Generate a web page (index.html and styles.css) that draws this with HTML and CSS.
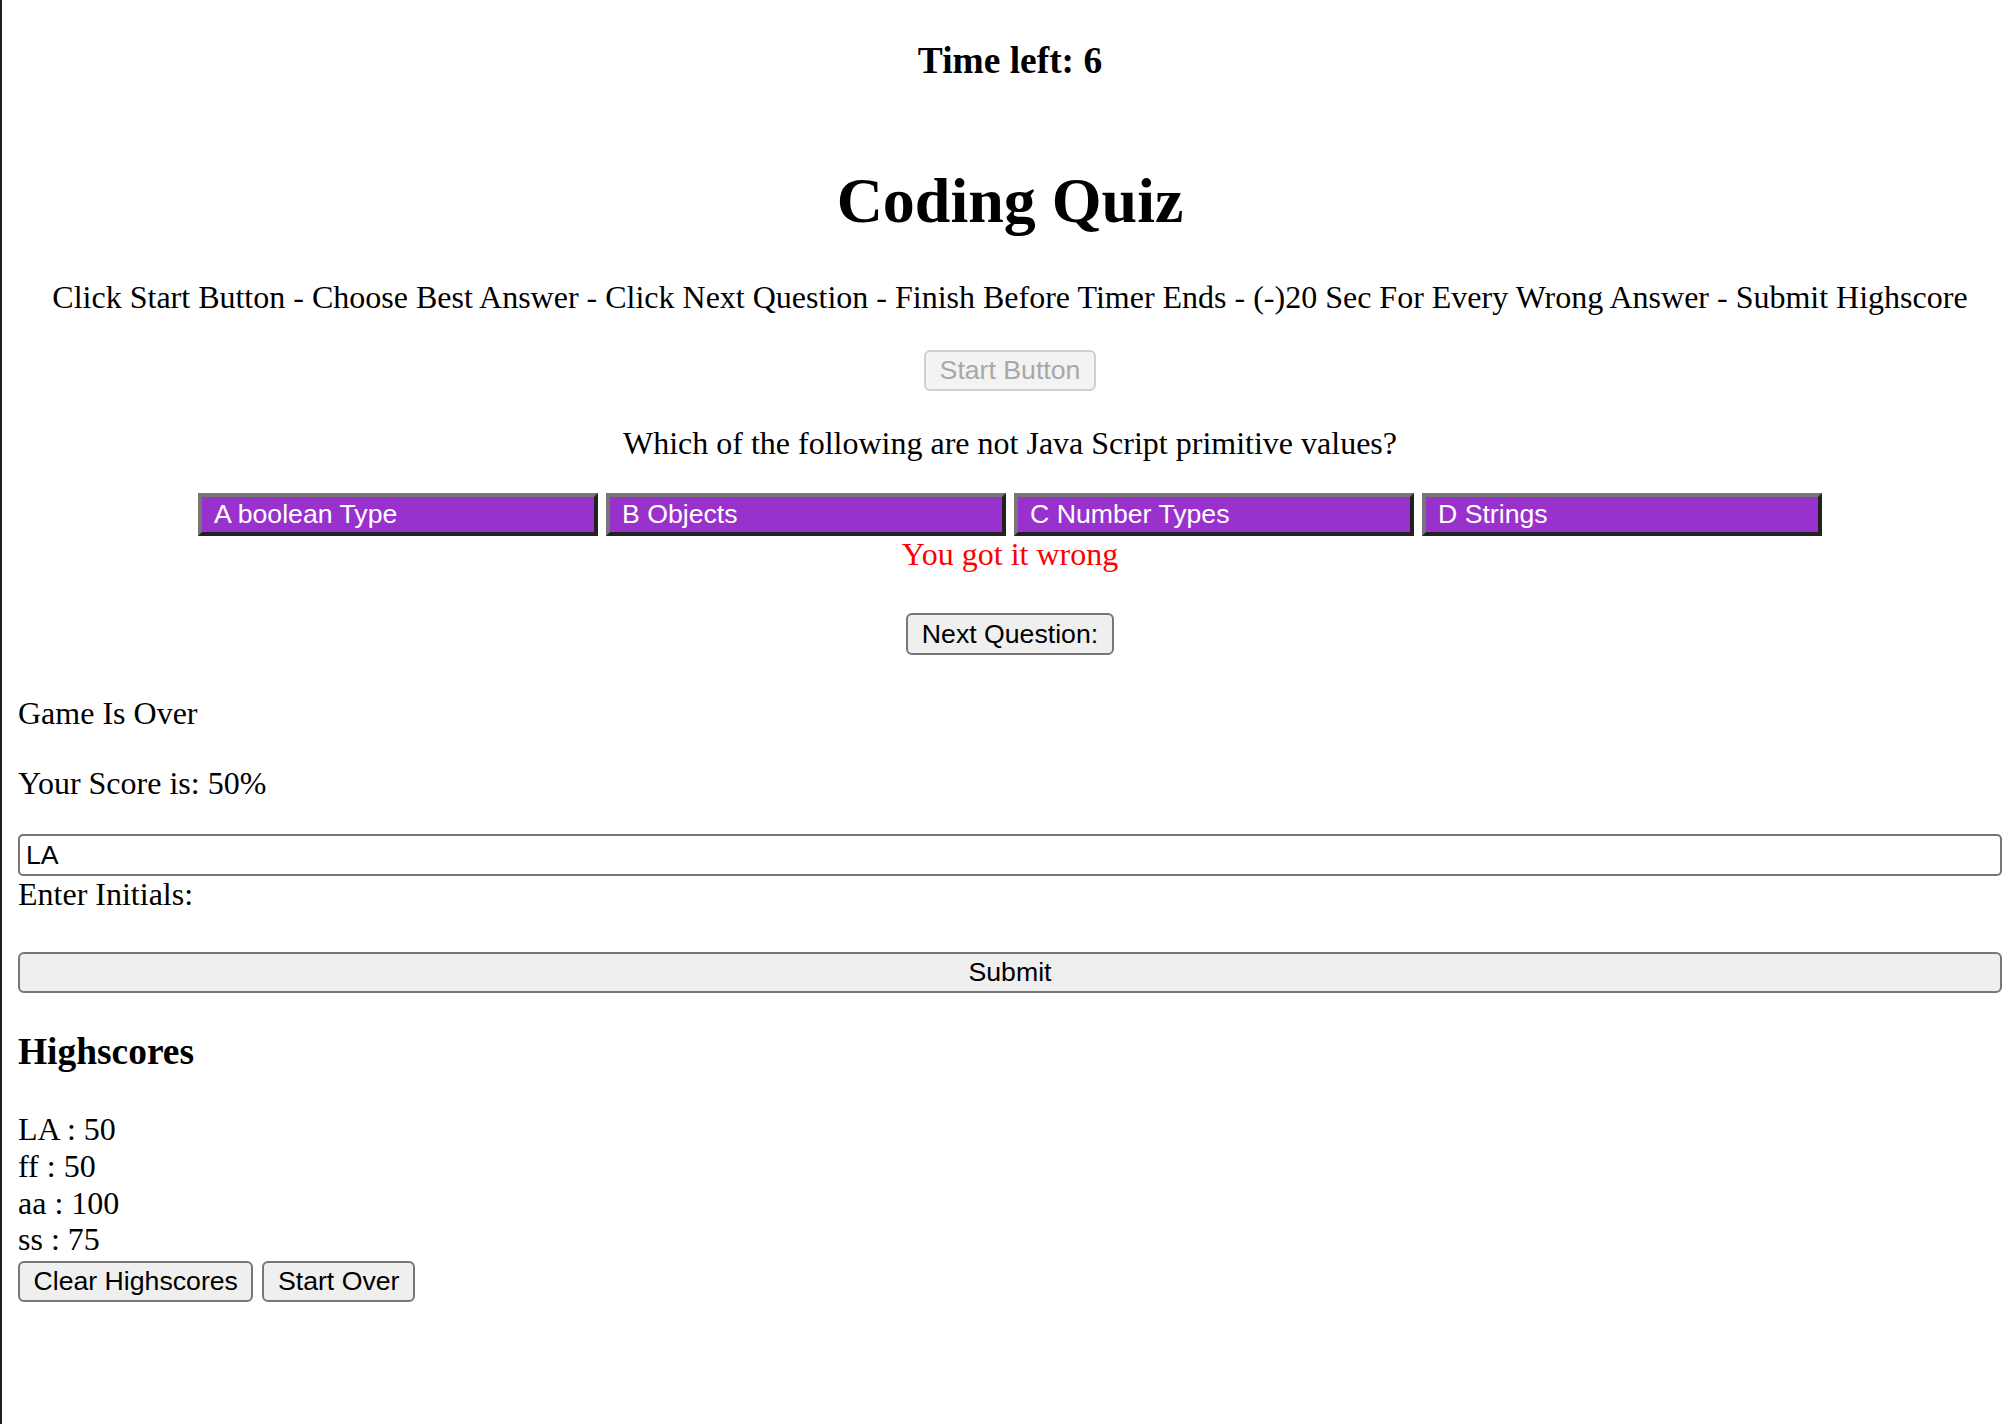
FILE: index.html
```html
<!DOCTYPE html>
<html lang="en">
<head>
<meta charset="utf-8">
<title>Coding Quiz</title>
<link rel="stylesheet" href="styles.css">
</head>
<body>
<header class="quiz">
  <h3 class="timer">Time left: 6</h3>
  <h1 class="title">Coding Quiz</h1>
  <p class="instructions">Click Start Button - Choose Best Answer - Click Next Question - Finish Before Timer Ends - (-)20 Sec For Every Wrong Answer - Submit Highscore</p>
  <div class="start-row"><button class="btn btn-disabled" disabled>Start Button</button></div>
  <p class="question">Which of the following are not Java Script primitive values?</p>
  <div class="answers">
    <button class="answer">A boolean Type</button>
    <button class="answer">B Objects</button>
    <button class="answer">C Number Types</button>
    <button class="answer">D Strings</button>
  </div>
  <p class="feedback">You got it wrong</p>
  <div class="next-row"><button class="btn btn-next">Next Question:</button></div>
</header>
<section class="gameover">
  <p class="over">Game Is Over</p>
  <p class="score">Your Score is: 50%</p>
  <input class="initials" type="text" value="LA">
  <label class="label">Enter Initials:</label>
  <button class="btn submit">Submit</button>
</section>
<section class="highscores">
  <h3 class="hs-title">Highscores</h3>
  <ul class="hs-list">
    <li>LA : 50</li>
    <li>ff : 50</li>
    <li>aa : 100</li>
    <li>ss : 75</li>
  </ul>
  <div class="hs-actions">
    <button class="btn">Clear Highscores</button>
    <button class="btn">Start Over</button>
  </div>
</section>
</body>
</html>
```
FILE: styles.css
```css
html {
  border-left: 2px solid #1f1f1f;
  min-height: 100%;
  box-sizing: border-box;
  background: #fff;
}
body {
  margin: 0 8px 0 16px;
  font-family: "Liberation Serif", "Times New Roman", serif;
  font-size: 32px;
  line-height: 1.15;
  color: #000;
}
p, h1, h3, ul { margin: 0; }

.quiz { text-align: center; }
.timer {
  font-size: 37.44px;
  font-weight: bold;
  line-height: 1.15;
  margin-top: 39px;
}
.title {
  font-size: 64px;
  font-weight: bold;
  line-height: 1.15;
  margin-top: 81.6px;
}
.instructions { margin-top: 41.7px; }
.start-row {
  margin-top: 34.4px;
  display: flex;
  justify-content: center;
}
.question { margin-top: 33.8px; }
.answers {
  margin-top: 31.4px;
  display: flex;
  justify-content: center;
  gap: 8px;
}
.feedback { color: #ff0000; }
.next-row {
  margin-top: 40.4px;
  display: flex;
  justify-content: center;
}

.btn {
  font-family: "Liberation Sans", Arial, sans-serif;
  font-size: 26.67px;
  line-height: 1.15;
  height: 41px;
  box-sizing: border-box;
  padding: 0 13.5px;
  border: 2px solid #767676;
  border-radius: 6px;
  background: #efefef;
  color: #000;
  margin: 0;
}
.btn-next { height: 42px; padding: 0 14px; }
.btn-disabled {
  color: #a8a8a8;
  border-color: #cfcfcf;
  background: #f3f3f3;
}

.answer {
  width: 400px;
  height: 43px;
  box-sizing: border-box;
  margin: 0;
  padding: 0 12px;
  text-align: left;
  background: #9932cc;
  color: #fff;
  border-width: 4px;
  border-style: solid;
  border-color: #767676 #222 #222 #767676;
  border-radius: 0;
  font-family: "Liberation Sans", Arial, sans-serif;
  font-size: 26.67px;
  line-height: 1.15;
}

.over { margin-top: 39.8px; }
.score { margin-top: 33.2px; }
.initials {
  display: block;
  margin-top: 32.4px;
  width: 100%;
  height: 42px;
  box-sizing: border-box;
  padding: 0 6px;
  border: 2px solid #767676;
  border-radius: 5px;
  font-family: "Liberation Sans", Arial, sans-serif;
  font-size: 26.67px;
  color: #000;
  background: #fff;
}
.label { display: block; }
.submit {
  display: block;
  width: 100%;
  margin-top: 39.2px;
}

.hs-title {
  font-size: 37.44px;
  font-weight: bold;
  line-height: 1.15;
  margin-top: 36.9px;
}
.hs-list {
  list-style: none;
  padding: 0;
  margin-top: 37.8px;
}
.hs-actions {
  margin-top: 3px;
  display: flex;
  gap: 9px;
}
```
